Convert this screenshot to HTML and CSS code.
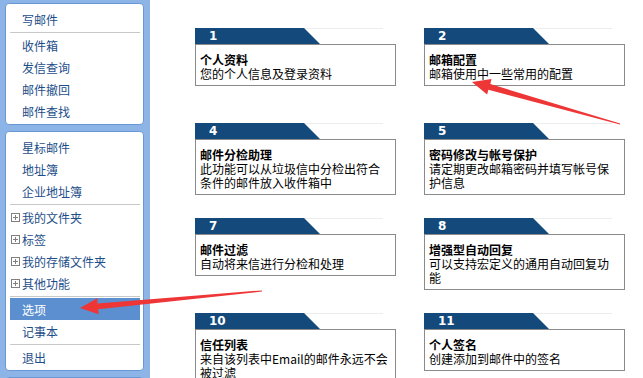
FILE: index.html
```html
<!DOCTYPE html>
<html lang="zh-CN">
<head>
    <meta charset="UTF-8">
    <meta name="viewport" content="width=device-width, initial-scale=1.0">
    <title>邮箱设置</title>
    <link rel="stylesheet" href="styles.css">
</head>
<body>
    <div class="page">
        <aside class="sidebar">
            <div class="panel">
                <a class="item">写邮件</a>
                <div class="sep"></div>
                <a class="item">收件箱</a>
                <a class="item">发信查询</a>
                <a class="item">邮件撤回</a>
                <a class="item">邮件查找</a>
            </div>
            <div class="panel">
                <a class="item">星标邮件</a>
                <a class="item">地址簿</a>
                <a class="item">企业地址簿</a>
                <div class="sep"></div>
                <a class="item folder"><svg class="plus" width="9" height="9" viewBox="0 0 9 9"><rect x="0.5" y="0.5" width="8" height="8" fill="#fff" stroke="#808080"/><path d="M2 4.5h5M4.5 2v5" stroke="#808080"/></svg>我的文件夹</a>
                <a class="item folder"><svg class="plus" width="9" height="9" viewBox="0 0 9 9"><rect x="0.5" y="0.5" width="8" height="8" fill="#fff" stroke="#808080"/><path d="M2 4.5h5M4.5 2v5" stroke="#808080"/></svg>标签</a>
                <a class="item folder"><svg class="plus" width="9" height="9" viewBox="0 0 9 9"><rect x="0.5" y="0.5" width="8" height="8" fill="#fff" stroke="#808080"/><path d="M2 4.5h5M4.5 2v5" stroke="#808080"/></svg>我的存储文件夹</a>
                <a class="item folder"><svg class="plus" width="9" height="9" viewBox="0 0 9 9"><rect x="0.5" y="0.5" width="8" height="8" fill="#fff" stroke="#808080"/><path d="M2 4.5h5M4.5 2v5" stroke="#808080"/></svg>其他功能</a>
                <div class="sep"></div>
                <a class="item active">选项</a>
                <a class="item">记事本</a>
                <div class="sep"></div>
                <a class="item">退出</a>
            </div>
            <div class="panel">
                <a class="item">帮助</a>
            </div>
        </aside>

        <main class="main">
            <div class="cards">
                <div class="card">
                    <div class="card-head"><span class="tab">1</span></div>
                    <div class="card-body">
                        <div class="card-title">个人资料</div>
                        <div>您的个人信息及登录资料</div>
                    </div>
                </div>
                <div class="card">
                    <div class="card-head"><span class="tab">2</span></div>
                    <div class="card-body">
                        <div class="card-title">邮箱配置</div>
                        <div>邮箱使用中一些常用的配置</div>
                    </div>
                </div>
                <div class="card">
                    <div class="card-head"><span class="tab">4</span></div>
                    <div class="card-body">
                        <div class="card-title">邮件分检助理</div>
                        <div>此功能可以从垃圾信中分检出符合条件的邮件放入收件箱中</div>
                    </div>
                </div>
                <div class="card">
                    <div class="card-head"><span class="tab">5</span></div>
                    <div class="card-body">
                        <div class="card-title">密码修改与帐号保护</div>
                        <div>请定期更改邮箱密码并填写帐号保护信息</div>
                    </div>
                </div>
                <div class="card">
                    <div class="card-head"><span class="tab">7</span></div>
                    <div class="card-body">
                        <div class="card-title">邮件过滤</div>
                        <div>自动将来信进行分检和处理</div>
                    </div>
                </div>
                <div class="card">
                    <div class="card-head"><span class="tab">8</span></div>
                    <div class="card-body">
                        <div class="card-title">增强型自动回复</div>
                        <div>可以支持宏定义的通用自动回复功能</div>
                    </div>
                </div>
                <div class="card">
                    <div class="card-head"><span class="tab">10</span></div>
                    <div class="card-body">
                        <div class="card-title">信任列表</div>
                        <div>来自该列表中Email的邮件永远不会被过滤</div>
                    </div>
                </div>
                <div class="card">
                    <div class="card-head"><span class="tab">11</span></div>
                    <div class="card-body">
                        <div class="card-title">个人签名</div>
                        <div>创建添加到邮件中的签名</div>
                    </div>
                </div>
            </div>
        </main>

        <!-- red annotation arrows drawn over the page -->
        <svg class="arrows" width="643" height="378" viewBox="0 0 643 378">
            <polygon fill="#ee3636" points="472,82 491.5,79 490.3,84.1 620.1,123.4 619.9,124.6 488.4,89.8 487.1,94.6"/>
            <polygon fill="#ee3636" points="80,308 97.2,298.3 97.6,303.4 262,290.4 262,291.6 98.2,309.3 98.7,314.3"/>
        </svg>
    </div>
</body>
</html>
```

FILE: styles.css
```css
body {
    margin: 0;
    font-family: "Noto Sans CJK SC", "Liberation Sans", sans-serif;
    font-size: 12px;
    color: #000;
    background-color: #fff;
    overflow: hidden;
}
.page {
    position: relative;
    display: flex;
    width: 643px;
    height: 378px;
    overflow: hidden;
}
.sidebar {
    flex: 0 0 150px;
    box-sizing: border-box;
    padding: 3px 6px 0 5px;
    background-color: #8cb4e6;
    display: flex;
    flex-direction: column;
    gap: 6px;
}
.panel {
    flex-shrink: 0;
    background-color: #fff;
    border: 1px solid #6a97d4;
    border-radius: 4px;
    padding: 4px 3px 2px 4px;
    display: flex;
    flex-direction: column;
}
.item {
    display: flex;
    align-items: center;
    height: 22px;
    padding-left: 12px;
    color: #1d4e89;
    cursor: pointer;
}
.item.folder {
    padding-left: 1px;
}
.plus {
    margin-right: 2px;
    flex-shrink: 0;
}
.item.active {
    background-color: #5b8fcf;
    color: #fff;
}
.sep {
    flex-shrink: 0;
    height: 1px;
    margin: 2px 0 1px;
    background-color: #c8c8c8;
}
.main {
    flex: 1;
    padding: 28px 0 0 45px;
}
.cards {
    display: grid;
    grid-template-columns: 201px 201px;
    grid-auto-rows: 95px;
    column-gap: 28px;
}
.card-head {
    height: 16px;
    background: linear-gradient(#ededed, #ededed) 0 0 / 188px 1px no-repeat;
}
.tab {
    display: block;
    width: 111px;
    height: 16px;
    padding-left: 14px;
    line-height: 16px;
    background-color: #134a7b;
    color: #fff;
    font-family: "DejaVu Sans", "Liberation Sans", sans-serif;
    font-weight: bold;
    font-size: 12px;
    clip-path: polygon(0 0, 109px 0, 125px 100%, 0 100%);
}
.card-body {
    border: 1px solid #8a8a8a;
    padding: 8px 6px 4px 4px;
    line-height: 14px;
}
.card-title {
    font-weight: bold;
}
.arrows {
    position: absolute;
    top: 0;
    left: 0;
    pointer-events: none;
}
```
